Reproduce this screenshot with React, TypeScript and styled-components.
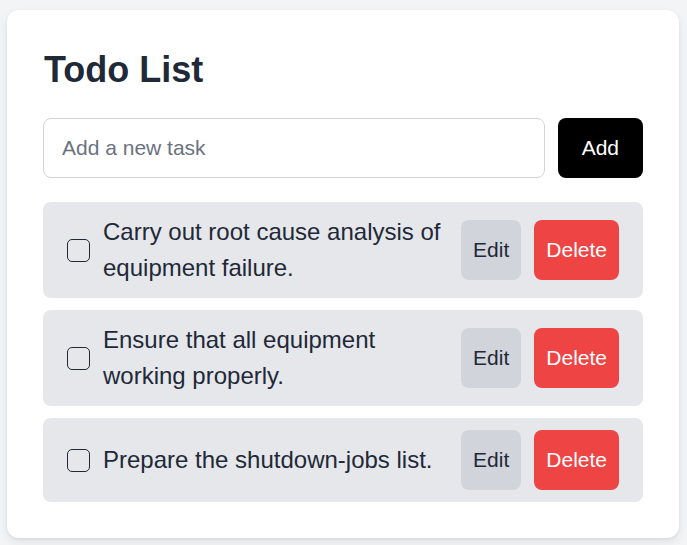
import React, { useState } from "react";
import styled, { createGlobalStyle } from "styled-components";

const GlobalStyle = createGlobalStyle`
  html, body {
    margin: 0;
    padding: 0;
    background: #f3f4f6;
    font-family: "Liberation Sans", Arial, sans-serif;
  }
  * { box-sizing: border-box; }
`;

const Page = styled.div`
  padding: 10px 8px 8px 7px;
`;

const Card = styled.div`
  width: 672px;
  min-height: 527px;
  background: #ffffff;
  border-radius: 12px;
  box-shadow: 0 4px 10px rgba(0, 0, 0, 0.08), 0 1px 3px rgba(0, 0, 0, 0.06);
  padding: 36px;
`;

const Title = styled.h1`
  margin: 0 0 24px 1px;
  font-size: 36px;
  line-height: 48px;
  font-weight: 700;
  color: #1f2937;
`;

const Form = styled.form`
  display: flex;
  gap: 13px;
  margin-bottom: 24px;
`;

const Input = styled.input`
  flex: 1;
  min-width: 0;
  height: 60px;
  border: 1px solid #d1d5db;
  border-radius: 8px;
  padding: 0 18px;
  font-family: inherit;
  font-size: 21px;
  color: #1f2937;
  outline: none;
  &::placeholder { color: #6b7280; }
`;

const Button = styled.button<{ $variant: "primary" | "secondary" | "danger" }>`
  flex: none;
  height: 60px;
  border: none;
  border-radius: 8px;
  font-family: inherit;
  font-size: 21px;
  padding: 0 ${(p) => (p.$variant === "primary" ? "24px" : "12px")};
  cursor: pointer;
  background: ${(p) =>
    p.$variant === "primary" ? "#000000" : p.$variant === "danger" ? "#ef4444" : "#d1d5db"};
  color: ${(p) => (p.$variant === "secondary" ? "#1f2937" : "#ffffff")};
`;

const List = styled.ul`
  list-style: none;
  margin: 0;
  padding: 0;
  display: flex;
  flex-direction: column;
  gap: 12px;
`;

const Row = styled.li`
  display: flex;
  align-items: center;
  gap: 16px;
  background: #e5e7eb;
  border-radius: 8px;
  padding: 12px 24px;
`;

const Left = styled.label`
  flex: 1;
  display: flex;
  align-items: center;
  gap: 13px;
`;

const Check = styled.input`
  appearance: none;
  flex: none;
  width: 23px;
  height: 23px;
  margin: 0;
  border: 1.5px solid #1f2937;
  border-radius: 5px;
  background: transparent;
  cursor: pointer;
  &:checked { background: #1f2937; }
`;

const TaskText = styled.span<{ $done: boolean }>`
  font-size: 24px;
  line-height: 36px;
  color: #1f2937;
  text-decoration: ${(p) => (p.$done ? "line-through" : "none")};
`;

const Actions = styled.div`
  display: flex;
  gap: 13px;
`;

const initial = [
  "Carry out root cause analysis of equipment failure.",
  "Ensure that all equipment working properly.",
  "Prepare the shutdown-jobs list.",
];

export default function App() {
  const [tasks, setTasks] = useState(initial.map((t) => ({ text: t, done: false })));
  const [value, setValue] = useState("");

  return (
    <Page>
      <GlobalStyle />
      <Card>
        <Title>Todo List</Title>
        <Form
          onSubmit={(e) => {
            e.preventDefault();
            if (value.trim()) {
              setTasks([...tasks, { text: value.trim(), done: false }]);
              setValue("");
            }
          }}
        >
          <Input
            placeholder="Add a new task"
            value={value}
            onChange={(e) => setValue(e.target.value)}
          />
          <Button type="submit" $variant="primary">Add</Button>
        </Form>
        <List>
          {tasks.map((t, i) => (
            <Row key={i}>
              <Left>
                <Check
                  type="checkbox"
                  checked={t.done}
                  onChange={() =>
                    setTasks(tasks.map((x, j) => (j === i ? { ...x, done: !x.done } : x)))
                  }
                />
                <TaskText $done={t.done}>{t.text}</TaskText>
              </Left>
              <Actions>
                <Button $variant="secondary">Edit</Button>
                <Button
                  $variant="danger"
                  onClick={() => setTasks(tasks.filter((_, j) => j !== i))}
                >
                  Delete
                </Button>
              </Actions>
            </Row>
          ))}
        </List>
      </Card>
    </Page>
  );
}
